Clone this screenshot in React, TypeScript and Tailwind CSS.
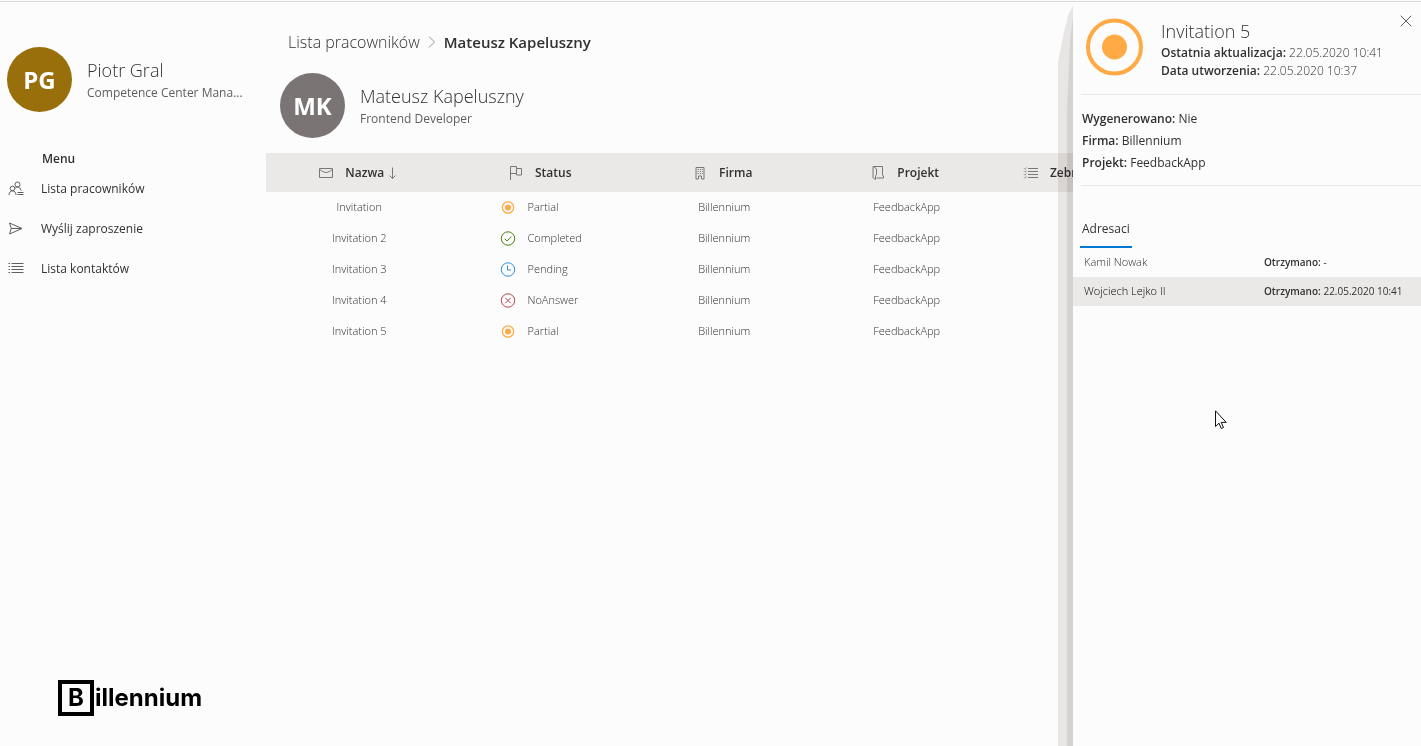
import type { ReactNode } from "react";

type StatusName = "Partial" | "Completed" | "Pending" | "NoAnswer";

interface Invitation {
  name: string;
  status: StatusName;
  company: string;
  project: string;
}

const invitations: Invitation[] = [
  { name: "Invitation", status: "Partial", company: "Billennium", project: "FeedbackApp" },
  { name: "Invitation 2", status: "Completed", company: "Billennium", project: "FeedbackApp" },
  { name: "Invitation 3", status: "Pending", company: "Billennium", project: "FeedbackApp" },
  { name: "Invitation 4", status: "NoAnswer", company: "Billennium", project: "FeedbackApp" },
  { name: "Invitation 5", status: "Partial", company: "Billennium", project: "FeedbackApp" },
];

function Icon({ children }: { children: ReactNode }) {
  return (
    <svg viewBox="0 0 16 16" fill="none" stroke="currentColor" strokeWidth="1" aria-hidden="true" className="size-4 shrink-0">
      {children}
    </svg>
  );
}

const PeopleIcon = () => (
  <Icon>
    <circle cx="9.500" cy="3.500" r="2.500" />
    <path d="M6.900 7.500C7.600 6.600 8.500 6 9.500 6c1.900 0 3.200 1.500 3.500 3.500" />
    <circle cx="4.500" cy="7.500" r="2.300" />
    <path d="M1 14c0-2.300 1.500-4.200 3.500-4.200S8 11.700 8 14" />
    <path d="M9.500 11.500h6M9.500 13.500h6" />
  </Icon>
);

const SendIcon = () => (
  <Icon>
    <path d="M1.500 2 14 7.500 1.500 13l1.800-5.500zM3.300 7.500H14" />
  </Icon>
);

const ListIcon = () => (
  <Icon>
    <path d="M3.500 2.500H15.500M3.500 5.500H15.500M3.500 8.500H15.500M3.500 11.500H15.500M.5 2.500h1.500M.5 5.500h1.500M.5 8.500h1.500M.5 11.500h1.500" />
  </Icon>
);

const MailIcon = () => (
  <Icon>
    <path d="M1.500 3.500h13v9h-13zM1.500 4.500C4 6 6 7.500 8 7.500s4-1.500 6.500-3" />
  </Icon>
);

const FlagIcon = () => (
  <Icon>
    <path d="M2.500 15V1.500h6v7h-6M8.500 3.500h5v6.500h-5V8.500" />
  </Icon>
);

const BuildingIcon = () => (
  <Icon>
    <path d="M4 2.500h8v11.500H9.500v-3h-3v3H4z" />
    <path d="M5.500 4.500h1.300M7.900 4.500H9.200M5.500 6.500h1.300M7.900 6.500H9.200M5.500 8.500h1.300M7.900 8.500H9.200M10 4.500h.8M10 6.500h.8M10 8.500h.8" />
  </Icon>
);

const ProjectIcon = () => (
  <Icon>
    <path d="M3 1.500h9.500v8.500l1 1v2H6.500M3 1.500c2 1 3.500 1.500 3.500 3.500v4.500L5.500 11v3.500C4.500 13.500 3 13.500 3 12.500z" />
  </Icon>
);

const ChecklistIcon = () => (
  <Icon>
    <path d="M5 3.500h10M5 6.500h10M5 9.500h10M5 12.500h10" />
    <path d="m1 3.300.9.900L3.700 2.400M1 6.300l.9.900 1.800-1.800M1 9.300l.9.900 1.800-1.800M1 12.300l.9.900 1.800-1.800" strokeWidth=".8" />
  </Icon>
);

function StatusIcon({ status }: { status: StatusName }) {
  if (status === "Partial")
    return (
      <Icon>
        <circle cx="8" cy="7.500" r="5.700" stroke="#ffaa44" strokeWidth="1.200" />
        <circle cx="8" cy="7.500" r="3" fill="#ffaa44" stroke="none" />
      </Icon>
    );
  if (status === "Completed")
    return (
      <span className="flex text-[#498205]">
        <Icon>
          <circle cx="8" cy="7.500" r="6.700" />
          <path d="m4.800 7.800 2.200 2.200 4.300-4.500" />
        </Icon>
      </span>
    );
  if (status === "Pending")
    return (
      <span className="flex text-[#2b8fe0]">
        <Icon>
          <circle cx="8" cy="7.500" r="6.700" />
          <path d="M7.500 3.500v4.500h3.500" />
        </Icon>
      </span>
    );
  return (
    <span className="flex text-[#b5444a]">
      <Icon>
        <circle cx="8" cy="7.500" r="6.700" />
        <path d="m5.300 4.800 5.400 5.400m0-5.400-5.400 5.400" />
      </Icon>
    </span>
  );
}

function Person({ initials, color, name, role }: { initials: string; color: string; name: string; role: string }) {
  return (
    <div className="flex items-center gap-[15px]">
      <div className={`flex size-[65px] shrink-0 items-center justify-center rounded-full text-2xl font-bold text-white ${color}`}>
        {initials}
      </div>
      <div className="min-w-0 pt-0.5">
        <div className="truncate text-lg leading-[25px] font-light">{name}</div>
        <div className="truncate text-xs leading-5 text-[#605e5c]">{role}</div>
      </div>
    </div>
  );
}

function HeaderLabel({ icon, label, children }: { icon: ReactNode; label: string; children?: ReactNode }) {
  return (
    <span className="inline-flex items-center gap-[11px] align-middle">
      <span className="text-[#797775]">{icon}</span>
      <span className="flex items-center gap-1 text-xs font-semibold">
        {label}
        {children}
      </span>
    </span>
  );
}

function Sidebar() {
  const items = [
    { label: "Lista pracowników", icon: <PeopleIcon /> },
    { label: "Wyślij zaproszenie", icon: <SendIcon /> },
    { label: "Lista kontaktów", icon: <ListIcon /> },
  ];
  return (
    <aside className="flex w-[266px] shrink-0 flex-col pt-[45px] pb-[30px]">
      <div className="pr-5 pl-[7px]">
        <Person initials="PG" color="bg-[#986f0b]" name="Piotr Gral" role="Competence Center Mana..." />
      </div>
      <nav aria-label="Menu" className="mt-[37px]">
        <h2 className="pl-[42px] text-xs leading-5 font-semibold">Menu</h2>
        <ul>
          {items.map((item) => (
            <li key={item.label}>
              <a href="#" className="flex h-10 items-center gap-[17px] pl-2 text-xs">
                <span className="text-[#605e5c]">{item.icon}</span>
                {item.label}
              </a>
            </li>
          ))}
        </ul>
      </nav>
      <div className="mt-auto ml-[58px] flex items-center gap-px font-['Inter',sans-serif] text-2xl leading-none font-bold text-black">
        <span className="flex size-9 items-center justify-center border-4 border-black">B</span>
        <span>illennium</span>
      </div>
    </aside>
  );
}

function InvitationTable() {
  return (
    <table className="mt-[15px] w-full table-fixed border-collapse">
      <colgroup>
        <col className="w-[15.8%]" />
        <col className="w-[15.8%]" />
        <col className="w-[15.8%]" />
        <col className="w-[15.8%]" />
        <col />
      </colgroup>
      <thead>
        <tr className="h-[39px] bg-[#ebe9e8] *:pb-0.5">
          <th>
            <HeaderLabel icon={<MailIcon />} label="Nazwa">
              <svg viewBox="0 0 8 14" className="h-3.5 w-2" fill="none" stroke="#797775" aria-hidden="true">
                <path d="M4.500 1.500v11M1.500 9.500l3 3 3-3" />
              </svg>
            </HeaderLabel>
          </th>
          <th>
            <HeaderLabel icon={<FlagIcon />} label="Status" />
          </th>
          <th>
            <HeaderLabel icon={<BuildingIcon />} label="Firma" />
          </th>
          <th>
            <HeaderLabel icon={<ProjectIcon />} label="Projekt" />
          </th>
          <th className="pl-[27px] text-left">
            <HeaderLabel icon={<ChecklistIcon />} label="Zebrane" />
          </th>
        </tr>
      </thead>
      <tbody>
        {invitations.map((row) => (
          <tr key={row.name} className="h-[31px] text-center text-[11px] font-light *:pl-1">
            <td>{row.name}</td>
            <td>
              <div className="flex items-center gap-[11px] pl-12">
                <StatusIcon status={row.status} />
                {row.status}
              </div>
            </td>
            <td>{row.company}</td>
            <td>{row.project}</td>
            <td />
          </tr>
        ))}
      </tbody>
    </table>
  );
}

function Field({ label, value }: { label: string; value: string }) {
  return (
    <p>
      <span className="font-semibold">{label}:</span> {value}
    </p>
  );
}

function DetailsPanel() {
  return (
    <div className="absolute inset-y-0 right-0 w-[348px]">
      <div className="absolute inset-y-0 -left-[15px] w-[15px] bg-[#ebe9e8] mix-blend-multiply [clip-path:polygon(100%_4px,70%_12px,40%_30px,0_60px,0_100%,100%_100%)]" />
      <div className="absolute inset-y-0 -left-1.5 w-1.5 bg-[#ebe9e8] mix-blend-multiply [clip-path:polygon(100%_14px,50%_40px,0_110px,0_100%,100%_100%)]" />
      <section aria-label="Invitation 5" className="relative flex h-full flex-col bg-[#fcfcfc]">
        <header className="flex items-start pt-4 pr-2 pl-[9px]">
          <svg viewBox="0 0 58 58" className="ml-1 size-[58px] shrink-0" aria-hidden="true">
            <circle cx="28.500" cy="29" r="26.500" fill="none" stroke="#ffaa44" strokeWidth="4" />
            <circle cx="28.500" cy="29" r="12.500" fill="#ffaa44" />
          </svg>
          <div className="ml-[17px] flex-1 text-xs leading-[18px] font-light">
            <h1 className="text-lg leading-[26px]">Invitation 5</h1>
            <Field label="Ostatnia aktualizacja" value="22.05.2020 10:41" />
            <Field label="Data utworzenia" value="22.05.2020 10:37" />
          </div>
        </header>
        <button type="button" aria-label="Zamknij" className="absolute top-[11px] right-[7px] flex size-4 items-center justify-center text-[#605e5c]">
          <svg viewBox="0 0 12 12" className="size-3" fill="none" stroke="currentColor" aria-hidden="true">
            <path d="m.7.7 10.600 10.600m0-10.600L.7 11.300" />
          </svg>
        </button>
        <div className="mt-3.5 ml-2 border-y border-[#eaeaea] pt-[13px] pb-[11px] pl-px text-xs leading-[22px]">
          <Field label="Wygenerowano" value="Nie" />
          <Field label="Firma" value="Billennium" />
          <Field label="Projekt" value="FeedbackApp" />
        </div>
        <div role="tablist" className="mt-[23px] ml-[7px] flex">
          <button type="button" role="tab" aria-selected="true" className="h-[39px] border-b-2 border-[#0078d4] px-0.5 pt-0.5 text-xs">
            Adresaci
          </button>
        </div>
        <ul className="text-[10px]">
          <li className="flex h-[29px] items-center pl-[11px]">
            <span className="w-[180px] text-[11px] font-light">Kamil Nowak</span>
            <Field label="Otrzymano" value="-" />
          </li>
          <li className="flex h-[29px] items-center bg-[#ebe9e8] pl-[11px]">
            <span className="w-[180px] text-[11px] font-light text-black">Wojciech Lejko II</span>
            <Field label="Otrzymano" value="22.05.2020 10:41" />
          </li>
        </ul>
      </section>
    </div>
  );
}

export default function App() {
  return (
    <div className="flex min-h-screen flex-col overflow-hidden bg-[#fcfcfc] pt-px font-['Open_Sans','Noto_Sans',sans-serif] text-[#323130]">
      <div className="relative flex flex-1 border-t border-[#dadada]">
        <Sidebar />
        <main className="min-w-0 flex-1">
          <nav aria-label="Breadcrumb" className="flex items-center gap-2 pt-7 pl-[22px] text-[15px] leading-6">
            <a href="#" className="text-base font-light">
              Lista pracowników
            </a>
            <svg viewBox="0 0 8 14" className="h-3.5 w-2" fill="none" stroke="#797775" strokeWidth=".8" aria-hidden="true">
              <path d="m1 1.500 5.500 5.500L1 12.500" />
            </svg>
            <span className="font-semibold" aria-current="page">
              Mateusz Kapeluszny
            </span>
          </nav>
          <div className="mt-[19px] pl-3.5">
            <Person initials="MK" color="bg-[#7a7574]" name="Mateusz Kapeluszny" role="Frontend Developer" />
          </div>
          <InvitationTable />
        </main>
        <DetailsPanel />
      </div>
      <svg viewBox="0 0 12 20" className="pointer-events-none absolute top-[410px] left-[1215px] h-5 w-3" aria-hidden="true">
        <path d="M.5.8v15.700l3.500-3.300 2.300 5.300 2.200-1-2.300-5.100h5z" fill="#fff" stroke="#111" />
      </svg>
    </div>
  );
}
